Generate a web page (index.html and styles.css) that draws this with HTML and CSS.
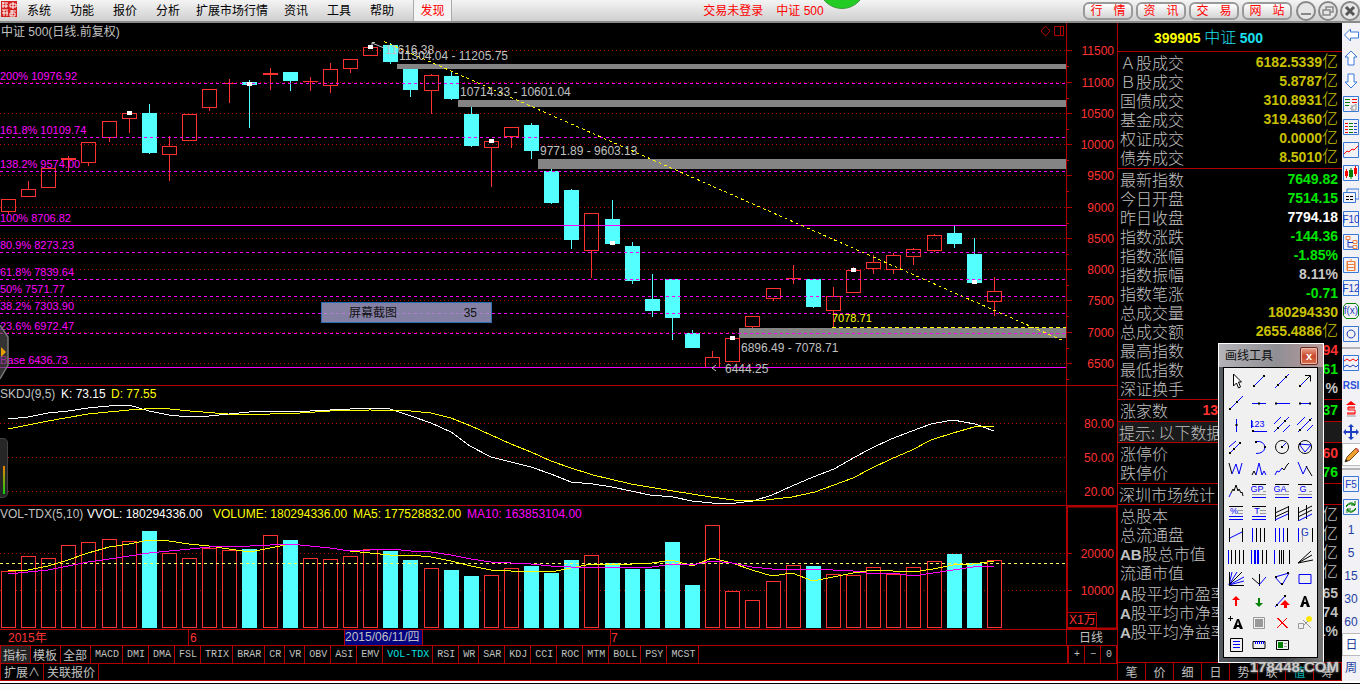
FILE: index.html
```html
<!DOCTYPE html>
<html lang="zh-CN">
<head>
<meta charset="utf-8">
<title>中证 500</title>
<link rel="stylesheet" href="styles.css">
</head>
<body>
<header class="topbar">
  <svg class="logo" viewBox="0 0 16 16" aria-hidden="true"><rect width="16" height="16" fill="#d3201f"/><path d="M1 2h6M2 1v6M1 5h6M5 3v4M9 3h6v3h-6zM12 1v7M1 9h6M3 9v6M1 12h6M6 10v5M9 10h6M9 12h5v3h-5zM11 9v6" stroke="#fff" fill="none"/></svg>
  <nav class="menu">
    <button>系统</button><button>功能</button><button>报价</button><button>分析</button><button class="wide">扩展市场行情</button><button>资讯</button><button>工具</button><button>帮助</button><button class="found">发现</button>
  </nav>
  <div class="status"><span>交易未登录</span><span>中证 500</span><i class="bubble"></i></div>
  <div class="quick"><button>行<span>情</span></button><button>资<span>讯</span></button><button>交<span>易</span></button><button>网<span>站</span></button></div>
  <div class="winbtns">
    <button aria-label="最小化"><svg viewBox="0 0 20 20"><circle cx="10" cy="10" r="9"/><path d="M5 13h10" stroke-width="2"/></svg></button>
    <button aria-label="还原"><svg viewBox="0 0 20 20"><circle cx="10" cy="10" r="9"/><path d="M5 9h7v5H5zM8 9V6h7v5h-3M8 6h7" stroke-width="1.5"/></svg></button>
    <button aria-label="关闭"><svg viewBox="0 0 20 20"><circle cx="10" cy="10" r="9"/><path d="M6 6l8 8M14 6l-8 8" stroke-width="3" stroke="#555"/></svg></button>
  </div>
</header>

<main class="main">
  <section class="charts">
    <svg class="panel" id="price" viewBox="0 23 1117 362"></svg>
    <svg class="panel" id="skdj" viewBox="0 385 1117 120"></svg>
    <svg class="panel" id="vol" viewBox="0 505 1117 140"></svg>
    <div class="tabs">
      <button class="cn on">指标</button><button class="cn">模板</button><button class="cn">全部</button><button>MACD</button><button>DMI</button><button>DMA</button><button>FSL</button><button>TRIX</button><button>BRAR</button><button>CR</button><button>VR</button><button>OBV</button><button>ASI</button><button>EMV</button><button class="sel">VOL-TDX</button><button>RSI</button><button>WR</button><button>SAR</button><button>KDJ</button><button>CCI</button><button>ROC</button><button>MTM</button><button>BOLL</button><button>PSY</button><button>MCST</button>
      <span class="zoomers"><button>+</button><button>−</button><button>0</button></span>
    </div>
    <div class="tabs second"><button>扩展∧</button><button>关联报价</button></div>
    <div class="snip"><span>屏幕截图</span><span>35</span></div>
    <svg class="handle" viewBox="0 0 10 56" aria-hidden="true"><path d="M0 0L8 12V40L0 54" fill="#555" fill-opacity=".6" stroke="#777" stroke-width="1.5"/><path d="M1 22l5 5-5 5z" fill="#e8a000"/></svg>
    <div class="meter"><i></i></div>
  </section>

  <aside class="quote">
    <h1><b class="y">399905</b> <span class="c">中证</span> <b class="c">500</b></h1>
    <table class="sec gold">
      <tr><th>Ａ股成交</th><td>6182.5339<i>亿</i></td></tr>
      <tr><th>Ｂ股成交</th><td>5.8787<i>亿</i></td></tr>
      <tr><th>国债成交</th><td>310.8931<i>亿</i></td></tr>
      <tr><th>基金成交</th><td>319.4360<i>亿</i></td></tr>
      <tr><th>权证成交</th><td>0.0000<i>亿</i></td></tr>
      <tr><th>债券成交</th><td>8.5010<i>亿</i></td></tr>
    </table>
    <table class="sec gold">
      <tr><th>最新指数</th><td class="g">7649.82</td></tr>
      <tr><th>今日开盘</th><td class="g">7514.15</td></tr>
      <tr><th>昨日收盘</th><td class="w">7794.18</td></tr>
      <tr><th>指数涨跌</th><td class="g">-144.36</td></tr>
      <tr><th>指数涨幅</th><td class="g">-1.85%</td></tr>
      <tr><th>指数振幅</th><td class="s">8.11%</td></tr>
      <tr><th>指数笔涨</th><td class="g">-0.71</td></tr>
      <tr><th>总成交量</th><td>180294330</td></tr>
      <tr><th>总成交额</th><td>2655.4886<i>亿</i></td></tr>
      <tr><th>最高指数</th><td class="r">94</td></tr>
      <tr><th>最低指数</th><td class="g">61</td></tr>
      <tr><th>深证换手</th><td class="s">%</td></tr>
    </table>
    <table class="sec"><tr><th>涨家数</th><td class="r up">13</td><td class="g">37</td></tr></table>
    <p class="sec tip">提示: 以下数据</p>
    <table class="sec">
      <tr><th>涨停价</th><td class="r">60</td></tr>
      <tr><th>跌停价</th><td class="g">76</td></tr>
    </table>
    <p class="sec">深圳市场统计</p>
    <table class="sec">
      <tr><th>总股本</th><td><i>亿</i></td></tr>
      <tr><th>总流通盘</th><td><i>亿</i></td></tr>
      <tr><th><b>AB</b>股总市值</th><td><i>亿</i></td></tr>
      <tr><th>流通市值</th><td><i>亿</i></td></tr>
      <tr class="lead"><th><b>A</b>股平均市盈率</th><td>65</td></tr>
      <tr><th><b>A</b>股平均市净率</th><td>74</td></tr>
      <tr><th><b>A</b>股平均净益率</th><td>1%</td></tr>
    </table>
    <div class="sidetabs"><button>笔</button><button>价</button><button>细</button><button>日</button><button>势</button><button>联</button><button class="sel">值</button><button>筹</button></div>
    <div class="watermark">178448.COM</div>
  </aside>

  <nav class="strip" id="strip"></nav>
</main>
<footer class="foot"></footer>

<section class="palette">
  <div class="ptitle"><span>画线工具</span><button aria-label="关闭">x</button></div>
  <div class="ptools" id="tools"></div>
</section>
<script src="app.js"></script>
</body>
</html>
```
FILE: styles.css
```css
* { box-sizing: border-box; }
body {
  margin: 0;
  min-height: 100vh;
  display: flex;
  flex-direction: column;
  position: relative;
  background: #000;
  font: 12px/16px "Liberation Sans", "Noto Sans CJK SC", sans-serif;
  overflow-x: hidden;
}
button {
  margin: 0;
  padding: 0;
  border: 0;
  background: none;
  font: inherit;
  color: inherit;
  white-space: nowrap;
}
svg { display: block; }
i { font-style: normal; }

/* top bar */
.topbar {
  height: 23px;
  display: flex;
  align-items: stretch;
  background: linear-gradient(#f4f4f4, #cfcfcf);
  border-bottom: 2px solid #8a8a8a;
  color: #000;
}
.logo { width: 16px; height: 16px; margin: 1px 0 0 1px; }
.menu { display: flex; padding-left: 10px; }
.menu button { width: 24px; margin-right: 19px; }
.menu .wide { width: 72px; margin: 0 16px 0 -3px; }
.menu .found {
  width: 39px;
  margin: 0;
  background: #f4f4f4;
  border: 1px solid #aaa;
  border-width: 0 1px;
  color: #f00;
}
.status {
  flex: 1;
  position: relative;
  display: flex;
  justify-content: center;
  align-items: center;
  gap: 13px;
  padding-right: 8px;
  color: #f00;
  overflow: hidden;
}
.bubble {
  position: absolute;
  top: -39px;
  left: calc(50% + 50px);
  width: 48px;
  height: 48px;
  border: 1px solid #3a9a3a;
  border-radius: 50%;
  background: #22cc22;
}
.quick { display: flex; gap: 3px; padding-top: 2px; }
.quick button {
  width: 50px;
  height: 18px;
  border: 2px solid #999;
  border-radius: 6px;
  background: linear-gradient(#fff, #d4d4d4);
  color: #f00;
  line-height: 14px;
}
.quick span { margin-left: 11px; }
.winbtns { display: flex; gap: 2px; margin-left: 4px; }
.winbtns svg { width: 20px; height: 20px; fill: #e6e6e6; stroke: #888; stroke-width: 2; }

/* layout */
.main { flex: 1; display: grid; grid-template-columns: minmax(0, 1fr) 225px 18px; }
.charts { position: relative; color: #c0c0c0; }
.panel { width: 100%; height: auto; font-size: 12px; }
.fib { font-size: 11px; fill: #f0f; }

.tabs { display: flex; height: 18px; border: 1px solid #b00000; border-width: 1px 0 0 1px; font: 10px/16px "Liberation Mono", monospace; }
.tabs button { padding: 0 3px 0 4px; border-right: 1px solid #b00000; }
.tabs .cn { padding: 0 3px 0 2px; font: 12px/16px "Noto Sans CJK SC", sans-serif; }
.tabs .on { background: #222; }
.tabs .sel { color: #00e5e5; }
.zoomers { display: flex; margin-left: auto; border-left: 2px solid #b00000; }
.zoomers button { width: 16px; }
.tabs.second { font: 12px/16px "Noto Sans CJK SC", sans-serif; border-bottom: 1px solid #b00000; }
.second button { padding: 0 3px; }

.snip {
  position: absolute;
  left: 321px;
  top: 279px;
  width: 171px;
  height: 21px;
  display: flex;
  justify-content: space-between;
  align-items: center;
  padding: 0 14px 0 27px;
  border: 1px solid #2c6eb5;
  background: rgba(160, 156, 200, .82);
  color: #111;
}
.handle { position: absolute; left: 0; top: 302px; width: 10px; height: 56px; }
.meter {
  position: absolute;
  left: 0;
  top: 415px;
  width: 8px;
  height: 60px;
  padding: 27px 2px 4px 3px;
  border: 1px solid #444;
  border-left: 0;
  border-radius: 0 5px 5px 0;
  background: #262626;
}
.meter i { display: block; width: 2px; height: 28px; background: linear-gradient(#f08000, #10d010); }

/* quote column */
.quote {
  position: relative;
  display: flex;
  flex-direction: column;
  border-left: 1px solid #b00000;
  color: #c0c0c0;
  font: 300 16px/19px "Noto Sans CJK SC", sans-serif;
}
.quote h1 { margin: 0; height: 28px; padding-right: 43px; text-align: center; font-size: 16px; font-weight: 300; line-height: 26px; }
.quote h1 b { font: bold 14px/20px "Liberation Sans", sans-serif; }
.quote td { font: bold 14px/19px "Liberation Sans", "Noto Sans CJK SC", sans-serif; }
.quote th b { font: bold 15px/1px "Liberation Sans", sans-serif; }
.quote .sec { width: 100%; margin: 0; border-top: 1px solid #b00000; border-collapse: separate; border-spacing: 0; }
.quote table.sec { padding: 1px 4px 1px 2px; }
.quote p.sec { height: 21px; padding-left: 1px; line-height: 20px; white-space: nowrap; }
.sec th, .sec td { padding: 0; height: 19px; white-space: nowrap; }
.sec th { font-weight: 300; text-align: left; width: 64px; }
.sec td { text-align: right; }
.sec td i { font: 300 16px/1px "Noto Sans CJK SC", sans-serif; }
.sec .up { width: 34px; }
.sec .lead th, .sec .lead td { height: 21px; padding-top: 2px; }
.quote p.tip { background: #1a1a1a; }
.gold td { color: #c8c000; }
.quote .y { color: #ff0; }
.quote .c { color: #1ce0f0; }
.quote .g { color: #00e600; }
.quote .w { color: #fff; }
.quote .s { color: #c8c8c8; }
.quote .r { color: #ff3232; }
.sidetabs { display: flex; margin-top: auto; height: 19px; border: 1px solid #b00000; border-width: 1px 0; font-size: 12px; line-height: 17px; font-weight: 400; }
.sidetabs button { flex: 1; border-right: 1px solid #b00000; }
.sidetabs .sel { color: #00b4b4; }
.watermark {
  position: absolute;
  z-index: 2;
  right: 3px;
  bottom: 4px;
  font: bold 15px/20px "Liberation Sans", sans-serif;
  color: rgba(225, 225, 225, .85);
  text-shadow: 0 0 2px #555, 0 0 3px #888;
}

/* icon strip */
.strip { background: #f1f1f6; display: flex; flex-direction: column; }
.strip button { width: 18px; height: 23px; display: grid; place-items: center; color: #1d3fa0; font-size: 12px; line-height: 16px; }
.strip svg { width: 16px; height: 16px; }
.strip hr { width: 100%; height: 2px; margin: 2px 0; border: 0; background: #b4b4b4; }
.strip .rsi { font-size: 10px; font-weight: bold; color: #2a50d8; }
.strip .on { background: #fff; border: 1px solid #bbb; border-right: 0; }
.foot { height: 9px; background: #fafafa; box-shadow: inset 0 2px #fff, inset 0 3px #000; }

/* drawing tools */
.palette {
  position: absolute;
  right: 36px;
  top: 343px;
  width: 106px;
  padding: 1px 5px 4px 4px;
  border: 1px solid #fff;
  background: linear-gradient(90deg, #555b60, #3b3e42 60%, #777);
}
.ptitle {
  display: flex;
  justify-content: space-between;
  align-items: center;
  height: 23px;
  margin: -1px -5px 0 -4px;
  padding: 0 5px 0 6px;
  background: linear-gradient(90deg, #b4b4b8, #8f8f94 55%, #b89a9c);
  color: #111;
}
.ptitle button {
  width: 18px;
  height: 18px;
  border: 1px solid #6b2a20;
  border-radius: 2px;
  box-shadow: inset 0 0 0 1px #f0b8a8;
  background: linear-gradient(#eaa590, #c8482c 50%, #d87050);
  color: #fff;
  font: bold 11px/14px "Liberation Sans", sans-serif;
}
.ptools { display: grid; grid-template-columns: repeat(4, 1fr); grid-auto-rows: 22px; padding: 2px 1px 1px 0; border: 1px solid #000; background: #f0f0f0; }
.ptools button { display: grid; place-items: center; }
.ptools svg { width: 16px; height: 16px; }
```
FILE: app.js
```js
const RED = '#ff3232', GRID = '#b00000', CYAN = '#54ffff', GREY = '#c0c0c0';
const cx = i => Math.round(8 + i * 20.12) + 0.5;
const line = (x1, y1, x2, y2, c, extra = '') =>
  `<path d="M${x1} ${y1}L${x2} ${y2}" stroke="${c}" fill="none" shape-rendering="crispEdges" ${extra}/>`;
const text = (x, y, s, c, extra = '') => `<text x="${x}" y="${y}" fill="${c}" ${extra}>${s}</text>`;
const rect = (x, y, w, h, c) => `<rect x="${x}" y="${y}" width="${w}" height="${h}" fill="${c}"/>`;
const box = (x, y, w, h, c) => `<rect x="${x}" y="${y}" width="${w}" height="${h}" fill="none" stroke="${c}"/>`;
const poly = (p, c) => `<polyline points="${p}" fill="none" stroke="${c}" shape-rendering="crispEdges"/>`;
const right = 'text-anchor="end"';

// up/down, body top, body bottom, high, low, marker y
const candles = [
  ['r',199,211,199,213],['r',189,196,181,196],['r',168,187,168,187],['r',158,159,156,171],['r',142,162,142,165],
  ['r',121,137,121,141],['r',113,118,113,132,113],['c',113,152,104,153],['r',146,154,136,180],['r',114,140,114,140],
  ['r',89,107,89,110],['r',83,83,79,102],['c',82,84,80,127,84],['r',73,74,68,89],['c',72,80,72,90],
  ['r',81,81,77,90],['r',69,85,63,92],['r',59,68,59,72],['r',47,55,47,55,47],['c',45,61,43,63],
  ['c',69,89,69,96],['r',75,90,74,113],['c',76,98,71,99],['c',114,145,107,146],['r',141,147,141,186,141],
  ['r',127,136,127,147],['c',125,150,123,158],['c',171,202,169,203],['c',190,239,189,248],['r',213,250,213,277],
  ['c',219,243,200,243,243],['c',246,280,242,283],['c',299,310,274,316],['c',279,317,279,339],['c',333,347,330,347],
  ['r',357,367,351,367],['r',338,361,338,361,338],['r',316,326,316,327],['r',288,298,288,300],['r',278,278,265,283],
  ['c',279,306,279,307],['r',296,310,287,327],['r',270,292,267,292,270],['r',262,268,255,273],['r',255,269,253,273],
  ['r',249,256,248,264],['r',235,250,234,251],['c',233,243,226,247],['c',254,282,238,283,282],['r',291,301,277,315]
];
const volumes = [571,556,558,545,542,539,541,531,553,558,548,550,549,535,540,558,559,556,549,551,560,568,570,576,575,
  568,566,573,560,555,563,569,569,542,585,525,591,600,581,565,566,574,575,567,574,567,561,554,563,560];

function drawPrice() {
  let s = '';
  const levels = [50,82,113,144,175,207,238,269,300,332,363];
  levels.forEach((y, i) => {
    s += line(0, y + .5, 1066, y + .5, GRID, 'stroke-dasharray="1 3"');
    s += line(1066, y + .5, 1072, y + .5, GRID) + line(1066, y + 16.5, 1069, y + 16.5, GRID);
    s += text(1114, y + 5, 11500 - i * 500, RED, right);
  });
  [[397,64,5],[458,100,7],[538,159,10],[739,328,10]].forEach(([x, y, h]) => s += rect(x, y, 1066 - x, h, '#848484'));
  candles.forEach(([k, t, b, hi, lo], i) => {
    const x = cx(i);
    if (k === 'c') s += line(x, hi, x, lo + 1, CYAN) + rect(x - 7.5, t, 15, b - t + 1, CYAN);
    else {
      s += line(x, hi, x, t, RED) + line(x, b, x, lo + 1, RED);
      s += b - t < 2 ? rect(x - 7.5, t, 15, b - t + 1, RED) : box(x - 7, t + .5, 14, b - t, RED);
    }
  });
  [[83,'200% 10976.92'],[137,'161.8% 10109.74'],[171,'138.2% 9574.00'],[225,'100% 8706.82',1],[252,'80.9% 8273.23'],
   [279,'61.8% 7839.64'],[296,'50% 7571.77'],[313,'38.2% 7303.90'],[333,'23.6% 6972.47'],[367,'Base 6436.73',1]
  ].forEach(([y, t, solid]) => {
    s += line(0, y + .5, 1066, y + .5, '#f0f', solid ? '' : 'stroke-dasharray="3 3"');
    s += `<text x="0" y="${y - 3}" class="fib">${t}</text>`;
  });
  candles.forEach((c, i) => { if (c[5]) s += rect(cx(i) - 2.5, c[5] - 2, 5, 4, '#fff'); });
  s += line(384, 41.5, 1065, 341.5, '#ff0', 'stroke-dasharray="3 3"');
  s += line(832, 327.5, 1066, 327.5, '#ff0', 'stroke-dasharray="4 3"');
  s += text(1, 36, '中证 500(日线.前复权)', GREY);
  s += text(385, 54, '11616.38', GREY) + text(399, 60, '11304.04 - 11205.75', GREY);
  s += text(460, 96, '10714.33 - 10601.04', GREY) + text(540, 155, '9771.89 - 9603.13', GREY);
  s += text(741, 352, '6896.49 - 7078.71', GREY) + text(725, 373, '6444.25', GREY);
  s += `<path d="M375 42.500h-3v3M372 43l12 5M716 365l-4 3 4 3" stroke="${GREY}" fill="none"/>`;
  s += text(832, 322, '7078.71', '#ff0', 'font-size="11"');
  s += `<path d="M1045.500 26l4.500 5-4.500 5-4.500-5zM1054.500 26.500h9v9h-9zM1060.500 26v10" stroke="#b00000" fill="none"/>`;
  s += line(1066.5, 23, 1066.5, 385, GRID);
  document.getElementById('price').innerHTML = s;
}

function drawSkdj() {
  let s = line(0, 385.5, 1117, 385.5, GRID) + line(1066.5, 385, 1066.5, 505, GRID);
  [[423,'80.00'],[457,'50.00'],[491,'20.00']].forEach(([y, t]) => {
    s += line(0, y + .5, 1066, y + .5, GRID, 'stroke-dasharray="1 3"') + text(1114, y + 5, t, RED, right);
  });
  s += poly('8,419 28,417 48,413 68,411 88,408 109,406 129,405 149,411 169,415 189,417 209,416 229,414 249,412 270,411 310,411 350,409 370,408 390,409 411,416 431,423 451,432 470,446 491,457 511,462 531,467 551,474 571,482 593,484 612,487 650,495 673,497 692,501 712,503 736,503 753,501 772,495 792,486 813,477 834,469 855,457 870,449 891,439 912,431 931,424 953,420 975,424 994,431', '#fff');
  s += poly('8,429 48,421 88,414 129,410 160,408 190,411 215,413 240,415 270,414 300,413 330,411 370,410 411,411 431,413 451,418 471,426 491,435 511,444 531,452 551,461 571,468 593,475 631,484 673,491 711,497 734,500 757,501 792,497 815,492 834,485 853,478 870,469 891,459 912,450 931,440 953,433 974,427 994,426', '#ff0');
  s += text(0, 398, 'SKDJ(9,5)', GREY) + text(61, 398, 'K: 73.15', '#fff') + text(111, 398, 'D: 77.55', '#ff0');
  document.getElementById('skdj').innerHTML = s;
}

function drawVolume() {
  let s = line(0, 505.5, 1117, 505.5, GRID);
  [[553,'20000'],[590,'10000']].forEach(([y, t]) => {
    s += line(0, y + .5, 1066, y + .5, GRID, 'stroke-dasharray="1 3"') + line(1067, y + .5, 1072, y + .5, GRID);
    s += text(1114, y + 5, t, RED, right);
  });
  volumes.forEach((y, i) => {
    const x = cx(i);
    s += candles[i][0] === 'c' ? rect(x - 7.5, y, 15, 628 - y, CYAN)
      : `<rect x="${x - 7}" y="${y + .5}" width="14" height="${627 - y}" fill="#000" stroke="${RED}"/>`;
  });
  s += line(0, 563.5, 1066, 563.5, '#ffff60', 'stroke-dasharray="3 3"');
  s += poly('8,571 28,570 48,566 68,560 88,553 109,547 129,544 149,540 169,541 189,544 209,546 229,549 250,552 270,548 290,544 310,546 330,548 350,551 370,553 390,555 410,555 431,557 451,561 471,566 491,570 511,571 531,571 551,572 571,568 591,564 611,564 632,564 652,563 672,560 692,566 712,558 732,563 752,570 772,576 792,573 813,581 833,577 853,573 873,570 893,571 913,572 933,569 953,565 973,564 994,561', '#ff0');
  s += poly('8,574 48,570 88,562 109,559 149,553 190,549 220,546 250,546 290,544 310,546 330,548 350,551 370,550 390,549 411,551 431,552 451,555 471,559 491,562 511,563 531,564 551,566 571,567 652,567 672,564 692,565 712,561 732,563 752,567 772,569 792,570 813,569 853,571 873,574 893,573 913,576 933,573 953,570 973,567 994,566', '#f0f');
  s += text(0, 518, 'VOL-TDX(5,10)', GREY) + text(87, 518, 'VVOL: 180294336.00', '#fff');
  s += text(213, 518, 'VOLUME: 180294336.00', '#ff0') + text(353, 518, 'MA5: 177528832.00', '#ff0');
  s += text(467, 518, 'MA10: 163853104.00', '#f0f');
  s += `<rect x="1067" y="506.500" width="50" height="122" fill="none" stroke="${GRID}" stroke-width="2"/>`;
  s += box(1067.5, 612.5, 29, 15, GRID) + text(1069, 624, 'X1万', RED);
  s += line(0, 629.5, 1117, 629.5, GRID) + line(1066.5, 629, 1066.5, 645, GRID);
  s += line(188.5, 630, 188.5, 645, GRID) + line(610.5, 630, 610.5, 645, GRID);
  s += text(8, 642, '2015年', RED) + text(190, 642, '6', RED) + text(611, 642, '7', RED);
  s += rect(344, 630, 79, 15, '#000080') + line(344.5, 630, 344.5, 645, GRID) + line(422.5, 630, 422.5, 645, GRID);
  s += text(345, 641, '2015/06/11/四', GREY) + text(1079, 642, '日线', GREY);
  document.getElementById('vol').innerHTML = s;
}

// Icons: "<colour key>:<path>" parts; upper-case keys fill, lower-case keys stroke, "t" parts are text.
const INK = { b: '#0000ff', k: '#000', g: '#999', r: '#f00', n: '#008000', l: '#3a78d8', o: '#f08040', w: '#fff', y: '#ffe800', d: '#1d3fc0' };
const dot = (x, y) => `K:M${x - 1} ${y - 1}h2v2h-2z`;
function icon(parts) {
  const body = parts.map(p => {
    const [k, d] = [p.slice(0, p.indexOf(':')), p.slice(p.indexOf(':') + 1)];
    if (k[0] === 't') return `<text x="${k[1] === 'b' ? 6 : 8}" y="${k.slice(2) || 11}" text-anchor="middle" font-size="${k[1] === 'b' ? 9 : 10}" fill="${INK[k[1]]}">${d}</text>`;
    return k === k.toLowerCase()
      ? `<path d="${d}" fill="none" stroke="${INK[k]}"/>`
      : `<path d="${d}" fill="${INK[k.toLowerCase()]}"/>`;
  }).join('');
  return `<svg viewBox="0 0 16 16" aria-hidden="true">${body}</svg>`;
}
const heading = s => [`tb9:${s}`, 'k:M1 1.500h14', 'g:M1 11.500h14', 'b:M1 14.500h14', 'g:M12 8.500h3'];
const tools = [
  ['W:M5 1v12l3-3 2 5 2-1-2-5h4z', 'k:M5.500 1v12l3-3 2 5 2-1-2-5h3z'],
  ['b:M3 13L13 3', dot(3,13), dot(13,3)], ['b:M1 15L15 1', dot(4,12), dot(12,4)], ['b:M3 13L13 3', 'k:M8 2.500h5.500v6M13 3l-4 4', dot(3,13)],
  ['b:M1 15L15 1', dot(2,14), dot(9,7)], ['b:M1 8.500h14', dot(8,8.5)], ['b:M2 8.500h14', dot(2,8.5)], ['b:M3 8.500h10', dot(3,8.5), dot(13,8.5)],
  ['b:M8.500 2v13', dot(8.5,8)], ['tb10:123', 'b:M2 14.500h14M.5 3v8', dot(2,14)],
  ['b:M0 7L7 0M0 15L15 0M9 15l7-7', dot(4,11), dot(11,4)], ['b:M0 8L8 0M1 15L15 1M10 14l6-6', dot(3,13), dot(13,3)],
  ['b:M1 8l7-6M2 14L13 3', dot(2,14), dot(6,10), dot(12,4)], ['b:M5 2.500q8-1 9 6-1 6-9 6', dot(5,3), dot(14,8)],
  ['k:M8 1.500a6.500 6.500 0 1 0 .1 0z', 'b:M8 8l4-4', dot(8,8)], ['k:M8 1.500a6.500 6.500 0 1 0 .1 0z', 'b:M2 5l12 1-6 7z', dot(3,5)],
  ['k:M1 2l3 11', 'b:M4 13L8 3l3 10 3-11'], ['k:M1 14l2-4 2 4', 'b:M5 14L8 2l3 12M11 14l2-4 2 4'],
  ['b:M1 14l2-4 2 1 3-4', 'k:M8 7l2 2 3-5 2-2'], ['b:M1 1l5 12 4-8', 'k:M9 5l6 10'],
  ['k:M3 10l2-4 1 2 2-6 2 6 1-2 2 4 1-1 1 4', 'b:M1 14l2-4'], heading('GP'), heading('GA'), heading('G'),
  ['tb9:%', 'k:M1 1.500h14', 'g:M10 5.500h5M10 8.500h5', 'b:M1 11.500h14M1 14.500h14'], ['tb9:T', 'k:M1 1.500h14', 'g:M9 5.500h6M9 8.500h6', 'b:M1 11.500h14M1 14.500h14'],
  ['k:M1.500 2v14M14.500 1v14M1 8l13-6M1 12l13-6', 'b:M1 15l13-6'], ['k:M1.500 2v14M9.500 0v14M1 8l14-7M1 12l14-7', 'b:M1 16l14-7'],
  ['k:M1.500 1v14M14.500 1v14', 'b:M2 11l12-6'], ['b:M1.500 1v14', 'k:M5.500 1v14M9.500 1v14M13.500 1v14'], ['b:M1.500 1v14M5.500 1v14M9.500 1v14', 'k:M13.500 1v14'], ['b:M1.500 1v14', 'g:M5.500 1v14', 'k:M15.500 1v14', 'td9:G'],
  ['b:M.5 1v14', 'k:M3.500 1v14M7.500 1v14M11.500 1v14M15.500 1v14'], ['b:M.5 1v14M3.500 1v14M4.500 1v14M6.500 1v14M7.500 1v14', 'k:M11.500 1v14M15.500 1v14'], ['b:M.5 1v14', 'k:M5.500 1v14M7.500 1v14M9.500 1v14M15.500 1v14'], ['k:M1 14L14 2M1 14l14-8M1 14l15-3'],
  ['b:M1 14L4 1M1 14L9 1M1 14L16 6M1 14l15-4', 'k:M1.500 1v13.500H16M1 14L14 1'], ['k:M1 7l7 6M8.500 3v12', 'b:M8 14l7-8'], ['b:M1 6l14-4-7 12z', dot(2,6), dot(14,2), dot(8,13)], ['b:M2 3.500h12v9H2z'],
  ['R:M8 3l4 4H9v6H7V7H4z'], ['N:M8 14l4-4H9V5H7v5H4z'], ['b:M1 14L12 2', dot(3,12), dot(11,3), 'R:M11 7l5 5h-3v3h-3v-3H6z'], ['K:M7 3h2l4 11h-3l-1-3H7l-1 3H3zM8 5L7 9h2z'],
  ['K:M9 4h2l4 10h-3l-1-2H9l-1 2H5z', 'W:M10 6l1 4H9z', 'k:M0 3.500h5M2.500 1v5'], ['G:M4 4h8v8H4z', 'g:M2.500 2.500h11v11h-11z'], ['r:M3 3l10 10M13 3L3 13M4 3l10 10'], ['g:M1.500 8.500h5v5h-5zM6 5l8 8', 'Y:M12 1a3 3 0 1 0 .1 0z', 'g:M7 10l4-4'],
  ['k:M2.500 1.500h12v13h-12z', 'b:M5 4.500h7M5 7.500h7M5 10.500h7'], ['k:M2 4.500h12v7H2z', 'b:M4.500 4v3M6.500 4v3M8.500 4v3M10.500 4v3M12.500 4v3'], ['k:M2.500 3.500h12v9h-12z', 'N:M4 5h5v6H4z', 'g:M10 6.500h3M10 9.500h3'], []
];
const frame = 'l:M.5 .5h15v15H.5z';
const strip = [
  ['W:M1 8l6-6v3h8v6H7v3z', 'l:M1.500 8l6-6v3h8v6h-8v3z'], ['W:M8 1l6 6h-3v8H5V7H2z', 'l:M8 1l6 6h-3v8H5V7H2z'], ['W:M8 15l6-6h-3V1H5v8H2z', 'l:M8 15l6-6h-3V1H5v8H2z'],
  [frame, 'n:M2 3.500h5M2 6.500h5M2 9.500h4', 'r:M9 3.500h5M9 6.500h5', 'g:M7 13l6-5v6H8M9 9v5'], [frame, 'r:M2 4.500h3M2 7.500h3M2 10.500h3M2 13.500h3', 'n:M6 4.500h4M6 7.500h4M6 10.500h4M6 13.500h4', 'd:M11 4.500h3M11 7.500h3M11 10.500h3M11 13.500h3'],
  [frame, 'r:M1 12l3-3 2 1 3-3 2 1 4-4'], [frame, 'R:M2 6h3v5H2zM11 3h3v6h-3z', 'N:M6 5h4v7H6z', 'r:M3.500 4v9M12.500 1v10', 'n:M8 3v11'],
  ['l:M4 4V1h12v10h-3M.5 4.500h12v10H.5z', 'k:M3 8.500h3M7 8.500h3M3 11.500h3M7 11.500h3'], [frame, 'td12:F10'], [frame, 'o:M3 2.500h4v3H3zM10 6.500h4v3h-4zM10 11.500h4v3h-4z', 'd:M5 6v7h5M5 8.500h5'],
  [frame, 'o:M4 4.500h8v9H4zM4 7.500h8M4 10.500h8M8 2v3M4.500 4v9M11.500 4v9'], [frame, 'td12:F12'], ['n:M3 .5h10l2.500 3v9l-2.500 3H3l-2.500-3v-9z', 'td11:f(x)'], [frame, 'd:M8 4a4 4 0 1 0 .1 0z'],
  '-', [frame, 'r:M1 6l3-2 3 2 3-2 3 2 2-2', 'd:M1 12l3-2 3 2 3-2 3 2 2-2'], 'RSI', ['R:M8 0l5 4H3z', 'r:M12 6H5v3h7v4H4M12 7H5M4 12h8', 'g:M4 15h9'], ['D:M8 0l3 3H9v4h4V5l3 3-3 3V9H9v4h2l-3 3-3-3h2V9H3v2L0 8l3-3v2h4V3H5z'],
  '*pencil', '-', [frame, 'td12:F5'], [frame, 'n:M3 7q5-6 9-1M13 9q-5 6-9 1M12 2v4H8M4 14v-4h4M3 8q5-6 9-1M13 10q-5 6-9 1'], '1', '5', '15', '30', '60', '*日', '周'
];

drawPrice();
drawSkdj();
drawVolume();
document.getElementById('tools').innerHTML = tools.map(t => t.length ? `<button>${icon(t)}</button>` : '').join('');
document.getElementById('strip').innerHTML = strip.map(t => {
  if (t === '-') return '<hr>';
  if (t === '*pencil') return '<button class="on"><svg viewBox="0 0 16 16"><path d="M1 15l2-5L12 1l3 3-9 9z" fill="#f0a030" stroke="#7a4a10"/><path d="M11 2l3 3 1-2-2-2z" fill="#e06060"/><path d="M1 15l1-3 2 2z" fill="#222"/></svg></button>';
  if (Array.isArray(t)) return `<button>${icon(t)}</button>`;
  return `<button class="${t === 'RSI' ? 'rsi' : t[0] === '*' ? 'on' : ''}">${t.replace('*', '')}</button>`;
}).join('');
```
